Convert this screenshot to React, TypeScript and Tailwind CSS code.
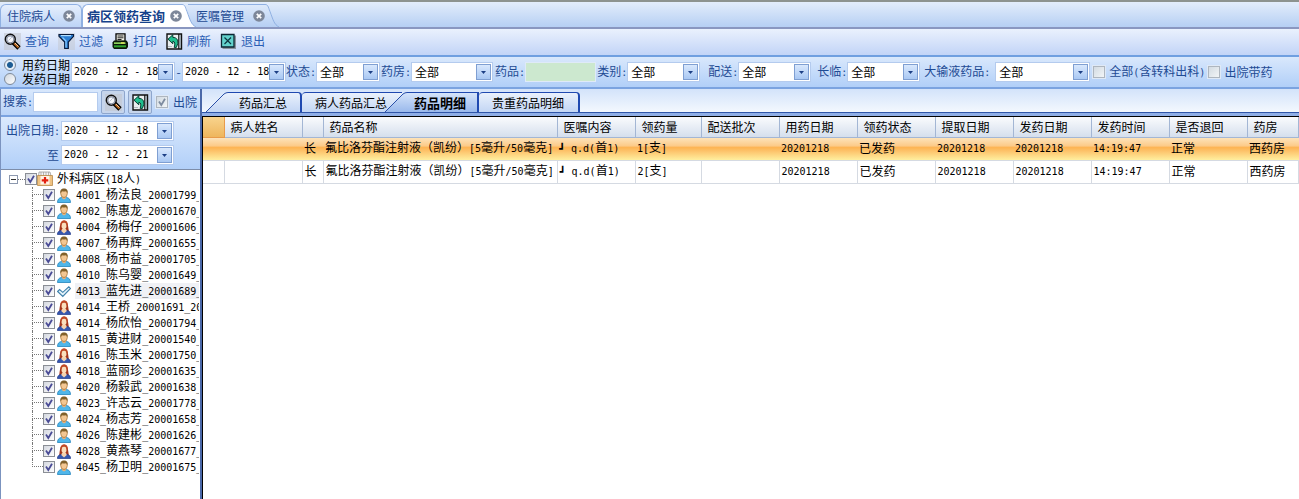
import { Fragment, useState } from "react";
import type { ReactNode } from "react";

const PATIENTS = [
  { label: "4001_杨法良_20001799_", icon: "man" },
  { label: "4002_陈惠龙_20001670_", icon: "man" },
  { label: "4004_杨梅仔_20001606_", icon: "woman" },
  { label: "4007_杨再辉_20001655_", icon: "man" },
  { label: "4008_杨市益_20001705_", icon: "man" },
  { label: "4010_陈乌婴_20001649_", icon: "man" },
  { label: "4013_蓝先进_20001689_", icon: "check" },
  { label: "4014_王桥_20001691_20", icon: "woman" },
  { label: "4014_杨欣怡_20001794_", icon: "woman" },
  { label: "4015_黄进财_20001540_", icon: "man" },
  { label: "4016_陈玉米_20001750_", icon: "woman" },
  { label: "4018_蓝丽珍_20001635_", icon: "woman" },
  { label: "4020_杨毅武_20001638_", icon: "man" },
  { label: "4023_许志云_20001778_", icon: "man" },
  { label: "4024_杨志芳_20001658_", icon: "man" },
  { label: "4026_陈建彬_20001626_", icon: "man" },
  { label: "4028_黄燕琴_20001677_", icon: "woman" },
  { label: "4045_杨卫明_20001675_", icon: "man" },
];

const COLUMNS = [
  { title: "", width: "w-[21px]" },
  { title: "病人姓名", width: "w-[78px]" },
  { title: "", width: "w-[21px]" },
  { title: "药品名称", width: "w-[234px]" },
  { title: "医嘱内容", width: "w-[78px]" },
  { title: "领药量", width: "w-[66px]" },
  { title: "配送批次", width: "w-[78px]" },
  { title: "用药日期", width: "w-[78px]" },
  { title: "领药状态", width: "w-[78px]" },
  { title: "提取日期", width: "w-[78px]" },
  { title: "发药日期", width: "w-[78px]" },
  { title: "发药时间", width: "w-[78px]" },
  { title: "是否退回", width: "w-[78px]" },
  { title: "药房", width: "" },
];

const DRUG = "氟比洛芬酯注射液（凯纷）[5毫升/50毫克]";
const ROWS = [
  ["", "", "长", DRUG, "┛ q.d(首1)", "1[支]", "", "20201218", "已发药", "20201218", "20201218", "14:19:47", "正常", "西药房"],
  ["", "", "长", DRUG, "┛ q.d(首1)", "2[支]", "", "20201218", "已发药", "20201218", "20201218", "14:19:47", "正常", "西药房"],
];

// Half-width runs go in a mono face so that two of them fill one CJK cell
function Mixed({ text }: { text: string }) {
  return (
    <>
      {text.split(/([\x20-\x7e\u2500-\u257f]+)/).map((part, i) =>
        i % 2 ? (
          <span key={i} className="font-['DejaVu_Sans_Mono',monospace] text-[10px] whitespace-pre">
            {part}
          </span>
        ) : (
          <Fragment key={i}>{part}</Fragment>
        )
      )}
    </>
  );
}

function SearchIcon() {
  return (
    <svg viewBox="0 0 17 17" className="size-[17px] shrink-0">
      <path d="M0 0h17v17H0z" fill="#c3c7cf" fillOpacity=".6" />
      <path d="M9.5 9.5l5.5 5.5" stroke="#000" strokeWidth="4.6" />
      <path d="M10 10l4.5 4.5" stroke="#b5651d" strokeWidth="2.2" />
      <path d="M11 10l3.5 3.5" stroke="#f3c9a0" strokeWidth="1" />
      <circle cx="6.3" cy="6.3" r="4.9" fill="#e6eaf0" stroke="#111" strokeWidth="1.6" />
      <circle cx="6.3" cy="6.3" r="3.5" fill="#f7f8fb" stroke="#8d94a6" strokeWidth="1.2" />
      <path d="M4.5 7.5l3.5-3.5" stroke="#bcc5d4" strokeWidth="1" />
    </svg>
  );
}

function FilterIcon() {
  return (
    <svg viewBox="0 0 17 17" className="size-[17px] shrink-0">
      <path d="M0 0h17v17H0z" fill="#c3c7cf" fillOpacity=".5" />
      <path d="M1 1.500h14.500v1.800L10.300 9v6.500H6.700V9L1 3.300z" fill="#2c7fd3" stroke="#071a3c" strokeWidth="1.2" />
      <path d="M3 2.600h10" stroke="#b5e0ff" strokeWidth="1.2" />
      <path d="M4.500 4.500L8 8v6.500" fill="none" stroke="#8accff" strokeWidth="1.2" />
    </svg>
  );
}

function PrintIcon() {
  return (
    <svg viewBox="0 0 17 17" className="size-[17px] shrink-0">
      <path d="M4 .8h9v7.500H4z" fill="#f4f4ea" stroke="#000" strokeWidth="1.3" />
      <path d="M5.500 3h6M5.500 4.800h6M5.500 6.500h4" stroke="#222" strokeWidth="1" />
      <path d="M2 7.500h12.500l1.500 2v4.500l-1.500 2H2L.5 14V9.500z" fill="#0b1a0b" />
      <path d="M2 9.300h11.500v1.700H2z" fill="#8bd15c" />
      <path d="M2 12.300h12v2H2z" fill="#2fa32e" />
      <path d="M9 9.300h3.500v1.300H9z" fill="#f3e95c" />
    </svg>
  );
}

function RefreshIcon() {
  return (
    <svg viewBox="0 0 17 17" className="size-[17px] shrink-0">
      <path d="M1 1h14.500v15H1z" fill="#e9eef0" stroke="#111" strokeWidth="1.400" />
      <path d="M12.800 1v15" stroke="#111" strokeWidth="1.200" />
      <path d="M14.100 2v13" stroke="#8b98a3" strokeWidth="1.200" />
      <path d="M2 6.200L6.800 1.800v2.600c3.600 0 5.400 2.200 5 6l-1.400 4H8.200C9.300 10.800 9 8.500 6.800 8.300v2.500z" fill="#1fc08f" stroke="#053d31" strokeWidth="1" />
      <path d="M2.500 13.500h4" stroke="#7b8790" strokeWidth="1" strokeDasharray="1 1" />
    </svg>
  );
}

function ExitIcon() {
  return (
    <svg viewBox="0 0 17 17" className="size-[17px] shrink-0">
      <path d="M2.500 2.500h13.500v13.500H2.500z" fill="#8b939d" />
      <path d="M1.500 1.500h12.500v12.500H1.500z" fill="#63d2cc" stroke="#0c2733" strokeWidth="1.300" />
      <path d="M4.500 4.500l6.500 6.500M11 4.500L4.500 11" stroke="#0b3540" strokeWidth="1.200" />
    </svg>
  );
}

function CloseIcon() {
  return (
    <svg viewBox="0 0 12 12" className="size-3">
      <circle cx="6" cy="6" r="5.800" fill="#7d8799" />
      <path d="M3.800 3.800l4.400 4.400M8.200 3.800L3.800 8.200" stroke="#fff" strokeWidth="1.700" />
    </svg>
  );
}

function ManIcon() {
  return (
    <svg viewBox="0 0 14 15" className="h-[15px] w-[14px] shrink-0">
      <path d="M0.500 14.500c0-3 1.500-4.700 4-5h5c2.500.3 4 2 4 5z" fill="#4fb6ea" stroke="#2284bd" strokeWidth=".8" />
      <path d="M5 8h4v2.200L7 11.600 5 10.200z" fill="#e9b27c" />
      <ellipse cx="7" cy="5.500" rx="3.300" ry="4" fill="#f3c793" stroke="#a06b2c" strokeWidth=".7" />
      <path d="M3.400 5.500C2.800 2 4.300.4 7 .4s4.300 1.600 3.600 5.100c-.5-1.500-1-2-1.600-2.300-1.500.4-3 .4-4 0-.8.500-1.200 1.200-1.600 2.300z" fill="#80602a" />
    </svg>
  );
}

function WomanIcon() {
  return (
    <svg viewBox="0 0 14 15" className="h-[15px] w-[14px] shrink-0">
      <path d="M2 12C3 9 2.300.4 7 .4S11 9 12.200 12z" fill="#a5361c" />
      <path d="M.4 14.500c0-2.300 1.200-3.600 3.600-4h6c2.400.4 3.600 1.700 3.600 4z" fill="#3558b0" stroke="#22398a" strokeWidth=".7" />
      <path d="M5 9h4l.8 2L7 13.500 4.200 11z" fill="#f6d3ae" />
      <ellipse cx="7" cy="5.800" rx="2.500" ry="3.400" fill="#fadfbd" />
      <path d="M4.300 5.500C4.500 3 6 2.300 7.500 2.200c1.300.5 2 1.500 2.200 3.300L11 5C10.500 1.500 9.500.5 7 .5S3.500 2 3.200 5z" fill="#c24a25" />
    </svg>
  );
}

function CheckedIcon() {
  return (
    <svg viewBox="0 0 14 15" className="h-[15px] w-[14px] shrink-0">
      <path d="M.6 7.500l2-2 3.200 2.800 6-5.500 1.700 1.700-7.700 8z" fill="#e4f3fa" stroke="#3f80ab" strokeWidth="1.100" />
    </svg>
  );
}

function WardIcon() {
  return (
    <svg viewBox="0 0 16 16" className="size-4 shrink-0">
      <path d="M2 1h11l1 4H1.500z" fill="#f4f4f4" stroke="#9a9a9a" strokeWidth=".8" />
      <path d="M4 1v4M6.500 1v4M9 1v4M11.500 1v4" stroke="#a5a5a5" strokeWidth=".8" />
      <path d="M.5 4.500h15v10H.5z" fill="#efc282" stroke="#b98a4b" strokeWidth=".8" />
      <path d="M3.500 5h9v8.500h-9z" fill="#fff3e6" />
      <path d="M6.900 6h2.200v2.200h2.200v2.200H9.100v2.200H6.900v-2.200H4.700V8.200h2.200z" fill="#e3210f" />
    </svg>
  );
}

function PatientIcon({ kind }: { kind: string }) {
  if (kind === "woman") return <WomanIcon />;
  if (kind === "check") return <CheckedIcon />;
  return <ManIcon />;
}

function CheckBox({ id, label, checked = false, muted = false }: { id: string; label?: string; checked?: boolean; muted?: boolean }) {
  const [on, setOn] = useState(checked);
  return (
    <span className="grid size-3 shrink-0">
      <input
        id={id}
        type="checkbox"
        aria-label={label}
        checked={on}
        onChange={(e) => setOn(e.target.checked)}
        className={`col-start-1 row-start-1 size-3 appearance-none border bg-linear-to-br ${
          muted ? "border-[#aeb6bf] from-[#d3dbe2] to-[#f2f5f7] outline outline-[#dfe9f6]" : "border-[#8b8f96] from-[#d4d8e0] to-white"
        }`}
      />
      {on && (
        <svg viewBox="0 0 12 12" className="pointer-events-none col-start-1 row-start-1 size-3">
          <path d="M3 5.500l2.300 3.500L9 2.800" fill="none" stroke={muted ? "#7e8ca0" : "#4a4c96"} strokeWidth="1.800" />
        </svg>
      )}
    </span>
  );
}

function DropArrow() {
  return (
    <span className="flex h-[16px] w-[15px] items-center justify-center border border-[#7f9fd2] bg-linear-to-b from-[#d9e8fd] to-[#a9c8f3]">
      <svg viewBox="0 0 5 3" className="h-[3px] w-[5px]">
        <path d="M0 0h5L2.500 3z" fill="#1c3f85" />
      </svg>
    </span>
  );
}

function DateBox({ id, value, label, width }: { id: string; value: string; label?: string; width: string }) {
  return (
    <div className={`flex h-5 items-center border border-[#b4cbee] bg-white pr-px ${width}`}>
      <input
        id={id}
        aria-label={label}
        defaultValue={value}
        className="min-w-0 flex-1 pl-0.5 font-['DejaVu_Sans_Mono',monospace] text-[10px] text-black outline-none"
      />
      <button type="button" aria-label="选择日期">
        <DropArrow />
      </button>
    </div>
  );
}

function SelectField({ id, label, width, margin }: { id: string; label: string; width: string; margin: string }) {
  return (
    <div className={`flex shrink-0 items-center ${margin}`}>
      <label htmlFor={id} className="flex-1 whitespace-nowrap">
        <Mixed text={label} />
      </label>
      <div className={`relative ${width}`}>
        <select id={id} className="block h-5 w-full appearance-none border border-[#b4cbee] bg-white pl-[3px] text-black outline-none">
          <option>全部</option>
        </select>
        <span className="pointer-events-none absolute top-0.5 right-0.5">
          <DropArrow />
        </span>
      </div>
    </div>
  );
}

function ToolButton({ icon, text }: { icon: ReactNode; text: string }) {
  return (
    <button type="button" className="flex items-center gap-1 text-[#2a5db4]">
      {icon}
      {text}
    </button>
  );
}

function PageTabs() {
  return (
    <nav className="flex h-[27px] items-end border-t-2 border-[#8d938f] bg-linear-to-b from-[#e3edfb] to-[#b6cff3] text-[#1f4b94]">
      <div className="flex h-[23px] w-[82px] items-center justify-between rounded-t-md border border-b-0 border-[#8fb0e2] bg-linear-to-b from-[#e6effc] to-[#bdd4f6] pr-[6px] pl-[6px]">
        <button type="button">住院病人</button>
        <button type="button" aria-label="关闭住院病人">
          <CloseIcon />
        </button>
      </div>
      <div className="flex h-[23px] w-[100px] items-center justify-between rounded-tl-md border-t border-l border-[#8fb0e2] bg-white pl-1 text-[13px] font-bold text-[#15428b]">
        <button type="button" className="whitespace-nowrap">病区领药查询</button>
        <button type="button" aria-label="关闭病区领药查询">
          <CloseIcon />
        </button>
      </div>
      <svg viewBox="0 0 14 23" className="h-[23px] w-[14px]">
        <path d="M0 0c3 0 3 2 5 7 3 8 4 14 9 16H0z" fill="#fff" />
        <path d="M0 .5c3 0 3 2 5 7 3 8 4 13 9 15.500" fill="none" stroke="#8fb0e2" />
      </svg>
      <div className="-ml-2 flex h-[23px] w-[77px] items-center justify-between border-t border-[#8fb0e2] pl-[8px]">
        <button type="button">医嘱管理</button>
        <button type="button" aria-label="关闭医嘱管理">
          <CloseIcon />
        </button>
      </div>
      <svg viewBox="0 0 14 23" className="h-[23px] w-[14px]">
        <path d="M0 .5c3 0 3 2 5 7 3 8 4 13 9 15.500" fill="none" stroke="#8fb0e2" />
      </svg>
    </nav>
  );
}

function FilterBar() {
  return (
    <form className="flex h-[34px] items-center border-y-2 border-t-[#6f9fe0] border-b-[#7ba3e0] bg-linear-to-b from-[#d9e8fc] to-[#b1cff8] pl-1 text-[#1f4b94]">
      <fieldset className="flex w-[67px] shrink-0 flex-col text-black">
        {["用药日期", "发药日期"].map((text, i) => (
          <label key={text} className="flex h-[14px] items-center gap-[6px] whitespace-nowrap">
            <input
              type="radio"
              name="dateKind"
              defaultChecked={i === 0}
              className="size-3 shrink-0 appearance-none rounded-full border border-[#7f8a99] bg-linear-to-br from-[#cfd6de] to-white checked:bg-[radial-gradient(circle,#1c5c94_0_2.500px,#e4edf6_3.500px)]"
            />
            {text}
          </label>
        ))}
      </fieldset>
      <DateBox id="dateFrom" label="开始日期" value="2020 - 12 - 18" width="w-[104px] shrink-0" />
      <span className="w-[7px] shrink-0 text-center">-</span>
      <DateBox id="dateTo" label="结束日期" value="2020 - 12 - 18" width="w-[104px] shrink-0" />
      <SelectField id="status" label="状态:" width="w-16" margin="" />
      <SelectField id="pharmacy" label="药房:" width="w-[82px]" margin="ml-px" />
      <div className="ml-0.5 flex shrink-0 items-center">
        <label htmlFor="drug">
          <Mixed text="药品:" />
        </label>
        <input id="drug" className="h-5 w-[71px] border border-[#dfeaf8] bg-[#cce8cf] px-1 outline-none" />
      </div>
      <SelectField id="category" label="类别:" width="w-[73px]" margin="ml-px" />
      <SelectField id="delivery" label="配送:" width="w-[73px]" margin="ml-2" />
      <SelectField id="term" label="长临:" width="w-[73px]" margin="ml-1.5" />
      <SelectField id="infusion" label="大输液药品:" width="w-[95px]" margin="ml-1 w-[166px]" />
      <div className="ml-[3px] flex shrink-0 items-center gap-1">
        <CheckBox id="all" muted />
        <label htmlFor="all" className="whitespace-nowrap">
          <Mixed text="全部(含转科出科)" />
        </label>
      </div>
      <div className="ml-[3px] flex shrink-0 items-center gap-1">
        <CheckBox id="takeHome" muted />
        <label htmlFor="takeHome" className="whitespace-nowrap">出院带药</label>
      </div>
    </form>
  );
}

function Sidebar() {
  return (
    <aside className="flex w-[202px] shrink-0 flex-col overflow-hidden border-r-2 border-l border-r-[#4a68a8] border-l-[#7b93bf] text-[#1f4b94]">
      <div className="flex h-[28px] items-center border-b-2 border-[#7ba3e0] bg-linear-to-b from-[#d9e8fc] to-[#b9d3f8] pl-0.5">
        <label htmlFor="search" className="whitespace-nowrap">
          <Mixed text="搜索:" />
        </label>
        <input id="search" className="h-5 w-[65px] border border-[#b4cbee] bg-white px-1 outline-none" />
        <button type="button" aria-label="搜索" className="ml-[3px] flex size-6 items-center justify-center rounded-xs border border-[#8ea6cd] bg-[#c6d5ec]">
          <SearchIcon />
        </button>
        <button type="button" aria-label="刷新" className="ml-[3px] flex size-6 items-center justify-center rounded-xs border border-[#8ea6cd] bg-[#c6d5ec]">
          <RefreshIcon />
        </button>
        <span className="ml-1 flex items-center gap-[5px]">
          <CheckBox id="discharged" checked muted />
          <label htmlFor="discharged" className="whitespace-nowrap">出院</label>
        </span>
      </div>
      <div className="flex h-[53px] flex-col justify-center gap-1 border-b border-[#7d8da8] bg-linear-to-b from-[#dbe9fd] to-[#b1cff8]">
        <div className="flex items-center">
          <label htmlFor="outFrom" className="w-[60px] pl-[5px] whitespace-nowrap">
            <Mixed text="出院日期:" />
          </label>
          <DateBox id="outFrom" value="2020 - 12 - 18" width="w-[113px]" />
        </div>
        <div className="flex items-center">
          <label htmlFor="outTo" className="w-[60px] pr-0.5 text-right">至</label>
          <DateBox id="outTo" value="2020 - 12 - 21" width="w-[113px]" />
        </div>
      </div>
      <div className="flex-1 overflow-hidden bg-white pt-px pr-px text-black">
        <div className="flex h-4 items-center pl-2">
          <button type="button" aria-label="收起" className="flex size-[9px] items-center justify-center border border-[#8c98ae] bg-white">
            <span className="h-px w-[5px] bg-[#333]" />
          </button>
          <span className="w-[7px] border-t border-dotted border-[#777]" />
          <CheckBox id="ward" label="外科病区" checked />
          <WardIcon />
          <span className="ml-1 whitespace-nowrap">
            <Mixed text="外科病区(18人)" />
          </span>
        </div>
        <ul className="pl-[31px]">
          {PATIENTS.map((p, i) => (
            <li key={p.label} className="flex h-4 items-center">
              <span className="flex h-4 w-[11px] shrink-0 flex-col">
                <span className="h-2 border-b border-l border-dotted border-[#777]" />
                {i < PATIENTS.length - 1 && <span className="h-2 border-l border-dotted border-[#777]" />}
              </span>
              <CheckBox id={`p${i}`} label={p.label} checked />
              <span className="w-0.5 shrink-0" />
              <PatientIcon kind={p.icon} />
              <span className={`ml-1 flex-1 overflow-hidden pl-px whitespace-nowrap ${p.icon === "check" ? "bg-[#f0f1f5]" : ""}`}>
                <Mixed text={p.label} />
              </span>
            </li>
          ))}
        </ul>
      </div>
    </aside>
  );
}

function TabSlope({ from, to }: { from: string; to: string }) {
  const id = `slope-${from.slice(1)}`;
  return (
    <svg viewBox="0 0 22 20" className="h-5 w-[22px] shrink-0">
      <linearGradient id={id} x1="0" y1="0" x2="0" y2="1">
        <stop offset="0" stopColor={from} />
        <stop offset="1" stopColor={to} />
      </linearGradient>
      <path d="M0 20L18 2Q20 .5 22 .5V20z" fill={`url(#${id})`} />
      <path d="M0 20L18 2Q20 .5 22 .5" fill="none" stroke="#2a4fa8" />
    </svg>
  );
}

function ViewTabs() {
  const face = "h-5 border-t border-[#1f49b0] whitespace-nowrap text-left";
  const plain = "bg-linear-to-b from-[#eaf1fc] to-[#c3d6f4]";
  return (
    <div className="flex h-[23px] items-end bg-linear-to-b from-[#d3e3fa] to-[#f3f8fe] pl-1 text-black">
      <TabSlope from="#eaf1fc" to="#c3d6f4" />
      <button type="button" className={`w-[74px] rounded-tr-sm border-r-2 pl-[11px] ${face} ${plain}`}>药品汇总</button>
      <button type="button" className={`w-[100px] rounded-tl-sm pl-[13px] ${face} ${plain}`}>病人药品汇总</button>
      <div className="relative -ml-[17px] flex">
        <TabSlope from="#d5e4fa" to="#9ab9ec" />
        <button type="button" className={`w-[72px] border-r-2 bg-linear-to-b from-[#d5e4fa] to-[#9ab9ec] pl-[7px] text-[13px] font-bold ${face}`}>
          药品明细
        </button>
      </div>
      <button type="button" className={`w-[101px] rounded-t-sm border-r-2 pl-[13px] ${face} ${plain}`}>贵重药品明细</button>
    </div>
  );
}

function DrugTable() {
  return (
    <table className="w-full table-fixed border-collapse text-left text-black">
      <thead>
        <tr className="h-[20px] bg-linear-to-b from-[#fafbfd] to-[#d5dfed]">
          {COLUMNS.map((col, i) => (
            <th
              key={i}
              className={`overflow-hidden border-r border-b border-[#a3b6d4] py-0 pr-0 pl-[6px] font-normal whitespace-nowrap ${col.width} ${
                i === 0 ? "border-[#e89b4a] bg-linear-to-b from-[#f8d48d] to-[#eeb65c]" : ""
              }`}
            >
              {col.title}
            </th>
          ))}
        </tr>
      </thead>
      <tbody>
        {ROWS.map((row, r) => (
          <tr
            key={r}
            className={`h-[23px] ${
              r === 0 ? "bg-[linear-gradient(#fde6c0,#fccb8a_38%,#fdb453_46%,#fdc46c_62%,#ffef9f)]" : "bg-white"
            }`}
          >
            {row.map((cell, c) => (
              <td
                key={c}
                className={`overflow-hidden border-b border-[#d5dae2] pt-0 pr-0 pb-0.5 pl-0.5 whitespace-nowrap ${r === 0 ? "" : "border-r"}`}
              >
                <Mixed text={cell} />
              </td>
            ))}
          </tr>
        ))}
      </tbody>
    </table>
  );
}

export default function App() {
  return (
    <div className="flex h-screen flex-col overflow-hidden bg-white font-['Noto_Sans_CJK_SC',sans-serif] text-[12px] leading-[14px]">
      <PageTabs />
      <div className="flex h-[28px] shrink-0 items-center gap-[9px] border-t-2 border-[#8a97c0] bg-linear-to-b from-[#eaf1fd] to-[#c2d4f7] pb-0.5 pl-1">
        <ToolButton icon={<SearchIcon />} text="查询" />
        <ToolButton icon={<FilterIcon />} text="过滤" />
        <ToolButton icon={<PrintIcon />} text="打印" />
        <ToolButton icon={<RefreshIcon />} text="刷新" />
        <ToolButton icon={<ExitIcon />} text="退出" />
      </div>
      <FilterBar />
      <div className="flex min-h-0 flex-1">
        <Sidebar />
        <main className="flex min-w-0 flex-1 flex-col">
          <ViewTabs />
          <div className="h-1 border-t border-[#2f55a8] bg-[#8faee6]" />
          <div className="flex-1 overflow-hidden border-t border-l border-black bg-white">
            <DrugTable />
          </div>
        </main>
      </div>
    </div>
  );
}
